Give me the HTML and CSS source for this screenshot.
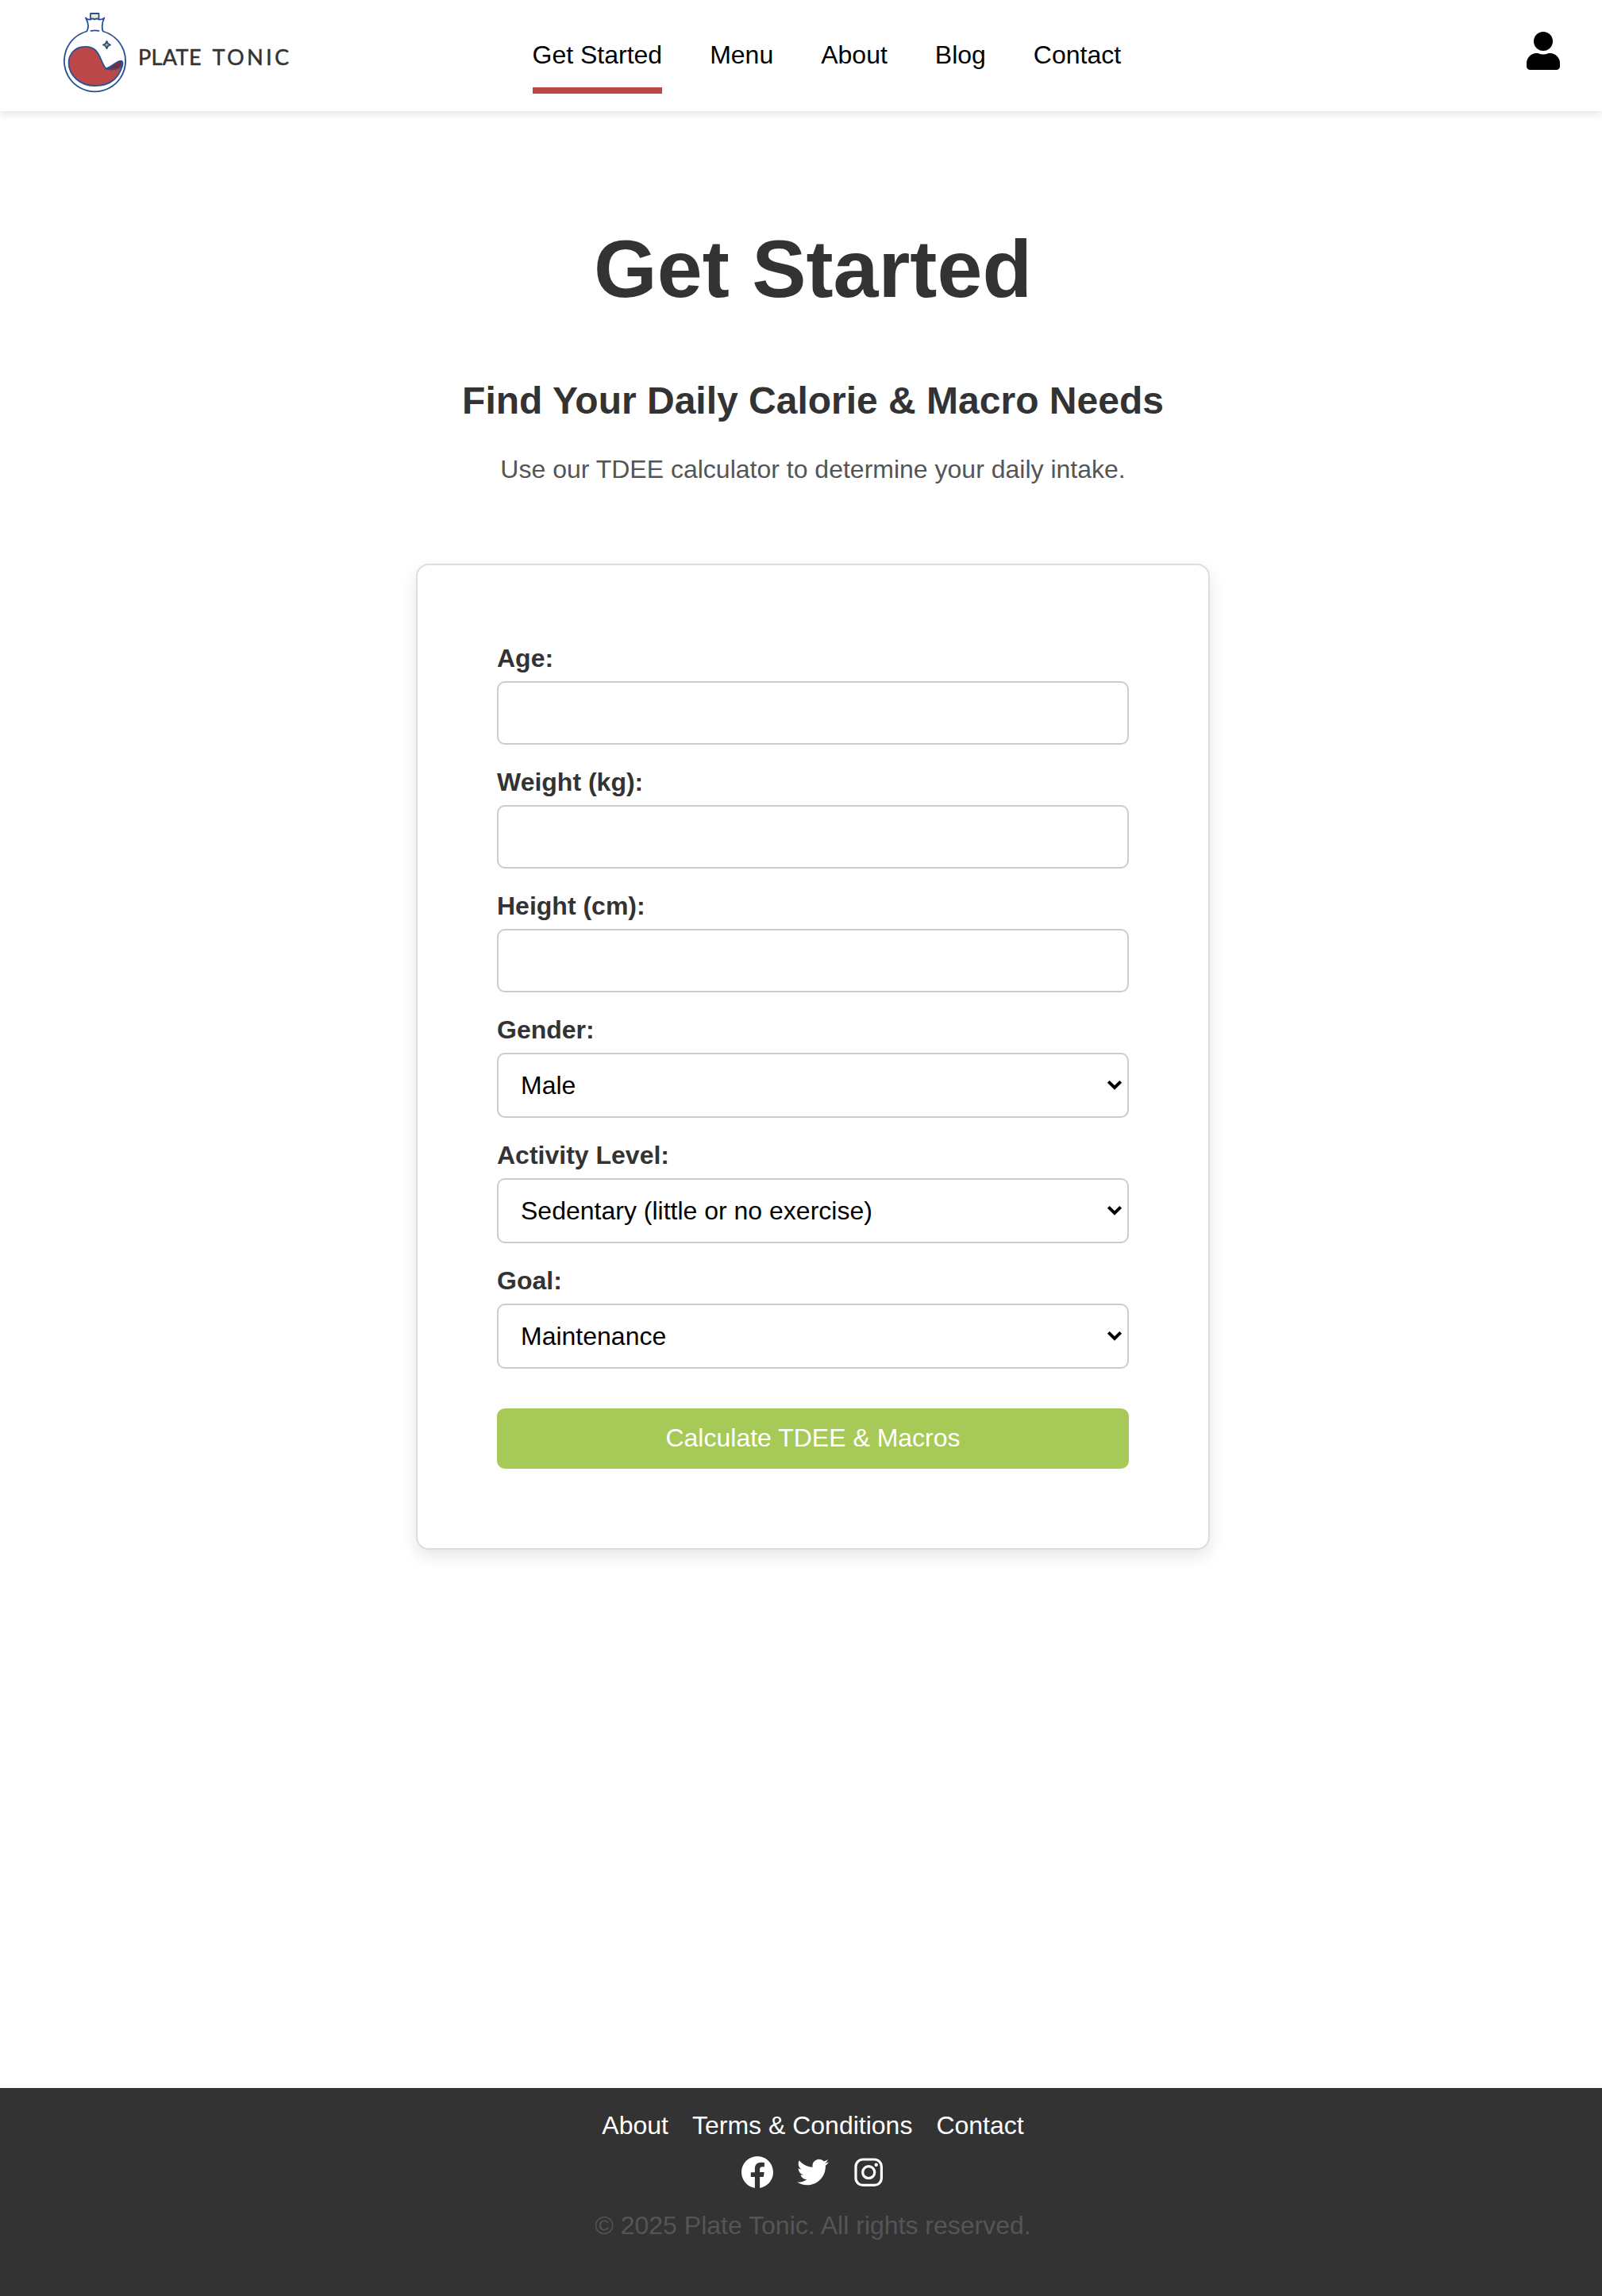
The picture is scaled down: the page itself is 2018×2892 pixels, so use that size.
FILE: index.html
```html
<!DOCTYPE html>
<html lang="en">
<head>
<meta charset="utf-8">
<title>Plate Tonic - Get Started</title>
<link rel="stylesheet" href="styles.css">
</head>
<body>
<header class="header">
  <a class="logo" href="#">
    <svg class="logo-flask" width="84" height="106" viewBox="0 0 84 106" fill="none" stroke="#27528f" stroke-width="1.8" stroke-linejoin="round" stroke-linecap="round">
      <path d="M34 9V2H44.500V9" fill="#f2e8cf"/>
      <path d="M28 7.500Q29.500 10 34 9.500Q36.500 7.500 39.200 9.500Q42 7.500 44.500 9.500Q49.500 10 51.300 7.500Q47 17 49.700 24.500A38.600 38.600 0 1 1 29.300 24.500Q33.500 17 28 7.500Z" fill="#fff"/>
      <path d="M34.500 23.800Q39.500 22.800 44.500 23.800"/>
      <path d="M26 44C44 43 45 57 50 66C52 70 53 72 56 72C62 71 68 62 73.500 62C77 64 71 79 64 85C56 92 48 93 39 93C21 93 6.600 80 6.600 64C6.600 53 15 44 26 44Z" fill="#bc4749"/>
      <path d="M53 71.500C61 70 67 61 72.500 62C74 65 73 68 70.500 70C66 73 58 73 53 71.500Z" fill="#7f2a33"/>
      <path d="M54.500 37L56 40L59 41.500L56 43L54.500 46L53 43L50 41.500L53 40Z" fill="#a7c957" stroke-width="1.900"/>
    </svg>
    <svg class="logo-name" width="192" height="32" viewBox="0 0 192 32"><text x="-1" y="25" textLength="79.500" lengthAdjust="spacing">PLATE</text><text x="92.500" y="25" textLength="96.500" lengthAdjust="spacing">TONIC</text></svg>
  </a>
  <nav class="nav">
    <a class="nav-link active" href="#">Get Started</a>
    <a class="nav-link" href="#">Menu</a>
    <a class="nav-link" href="#">About</a>
    <a class="nav-link" href="#">Blog</a>
    <a class="nav-link" href="#">Contact</a>
  </nav>
  <a class="account" href="#" aria-label="Account">
    <svg width="42" height="48" viewBox="0 0 42 48"><circle cx="21" cy="12" r="12"/><path d="M12.600 27H14.300Q21 30 27.700 27H29.400A12.600 12.600 0 0 1 42 39.600V43.500A4.500 4.500 0 0 1 37.500 48H4.500A4.500 4.500 0 0 1 0 43.500V39.600A12.600 12.600 0 0 1 12.600 27Z"/></svg>
  </a>
</header>

<main class="main">
  <h1 class="title">Get Started</h1>
  <h2 class="subtitle">Find Your Daily Calorie &amp; Macro Needs</h2>
  <p class="intro">Use our TDEE calculator to determine your daily intake.</p>
  <form class="card">
    <div class="field"><label for="age">Age:</label><input class="control" id="age" type="text"></div>
    <div class="field"><label for="weight">Weight (kg):</label><input class="control" id="weight" type="text"></div>
    <div class="field"><label for="height">Height (cm):</label><input class="control" id="height" type="text"></div>
    <div class="field"><label for="gender">Gender:</label>
      <div class="select"><select class="control" id="gender"><option>Male</option><option>Female</option></select><svg class="chevron" width="20" height="14" viewBox="0 0 20 14"><path d="M2.300 2.300L10 10L17.700 2.300"/></svg></div></div>
    <div class="field"><label for="activity">Activity Level:</label>
      <div class="select"><select class="control" id="activity"><option>Sedentary (little or no exercise)</option></select><svg class="chevron" width="20" height="14" viewBox="0 0 20 14"><path d="M2.300 2.300L10 10L17.700 2.300"/></svg></div></div>
    <div class="field"><label for="goal">Goal:</label>
      <div class="select"><select class="control" id="goal"><option>Maintenance</option></select><svg class="chevron" width="20" height="14" viewBox="0 0 20 14"><path d="M2.300 2.300L10 10L17.700 2.300"/></svg></div></div>
    <button class="submit" type="button">Calculate TDEE &amp; Macros</button>
  </form>
</main>

<footer class="footer">
  <div class="footer-links"><a href="#">About</a><a href="#">Terms &amp; Conditions</a><a href="#">Contact</a></div>
  <div class="social">
    <svg width="40" height="40" viewBox="0 0 16 16"><path d="M16 8.049c0-4.446-3.582-8.050-8-8.050C3.580 0-.002 3.603-.002 8.050c0 4.017 2.926 7.347 6.750 7.951v-5.625h-2.030V8.050H6.750V6.275c0-2.017 1.195-3.131 3.022-3.131.876 0 1.791.157 1.791.157v1.980h-1.009c-.993 0-1.303.621-1.303 1.258v1.510h2.218l-.354 2.326H9.250V16c3.824-.604 6.750-3.934 6.750-7.951z"/></svg>
    <svg width="40" height="40" viewBox="0 0 512 512"><path d="M459.370 151.716c.325 4.548.325 9.097.325 13.645 0 138.720-105.583 298.558-298.558 298.558-59.452 0-114.680-17.219-161.137-47.106 8.447.974 16.568 1.299 25.340 1.299 49.055 0 94.213-16.568 130.274-44.832-46.132-.975-84.792-31.188-98.112-72.772 6.498.974 12.995 1.624 19.818 1.624 9.421 0 18.843-1.300 27.614-3.573-48.081-9.747-84.143-51.980-84.143-102.985v-1.299c13.969 7.797 30.214 12.670 47.431 13.319-28.264-18.843-46.781-51.005-46.781-87.391 0-19.492 5.197-37.360 14.294-52.954 51.655 63.675 129.300 105.258 216.365 109.807-1.624-7.797-2.599-15.918-2.599-24.040 0-57.828 46.782-104.934 104.934-104.934 30.213 0 57.502 12.670 76.670 33.137 23.715-4.548 46.456-13.320 66.599-25.340-7.798 24.366-24.366 44.833-46.132 57.827 21.117-2.273 41.584-8.122 60.426-16.243-14.292 20.791-32.161 39.308-52.628 54.253z"/></svg>
    <svg width="40" height="40" viewBox="0 0 40 40"><g fill="none" stroke="#fff" stroke-width="3.200"><rect x="4" y="4" width="32.400" height="32.400" rx="9"/><circle cx="20.200" cy="20.200" r="7.500"/></g><circle cx="29.700" cy="10.800" r="2.200"/></svg>
  </div>
  <p class="copyright">© 2025 Plate Tonic. All rights reserved.</p>
</footer>
</body>
</html>
```
FILE: styles.css
```css
* { box-sizing: border-box; }
body {
  margin: 0;
  min-height: 2892px;
  display: flex;
  flex-direction: column;
  background: #fff;
  color: #333;
  font: 32px/36px "Liberation Sans", Arial, sans-serif;
  overflow-x: hidden;
}
a { color: inherit; text-decoration: none; }
h1, h2, p { margin: 0; }

.header {
  display: flex;
  align-items: flex-start;
  height: 140px;
  padding: 0 53px 0 80px;
  background: #fff;
  box-shadow: 0 4px 10px rgba(0, 0, 0, .1);
}
.logo { display: flex; width: 590.5px; padding-top: 14.5px; }
.logo-name { margin: 42px 0 0 11px; overflow: visible; }
.logo-name text { font: 27px Lato, sans-serif; fill: #333; stroke: #333; stroke-width: .5px; }
.nav { display: flex; gap: 60px; padding-top: 51px; color: #000; }
.nav-link { height: 67px; }
.nav-link.active { border-bottom: 8px solid #bc4749; }
.account { margin: 40px 0 0 auto; }
.account svg { display: block; }

.main {
  flex: 1;
  display: flex;
  flex-direction: column;
  align-items: center;
  padding: 140px 0 0 30px;
}
.title { font-size: 102.4px; line-height: 118px; }
.subtitle { margin-top: 80px; font-size: 48px; line-height: 54px; }
.intro { margin-top: 41px; color: #555; }
.card {
  display: flex;
  flex-direction: column;
  gap: 30px;
  width: 1000px;
  margin-top: 101px;
  padding: 100px;
  border: 2px solid #ddd;
  border-radius: 16px;
  background: #fff;
  box-shadow: 0 8px 20px rgba(0, 0, 0, .1);
}
.field { display: flex; flex-direction: column; gap: 12px; }
.field label { line-height: 34px; font-weight: bold; }
.control {
  width: 100%;
  height: 80px;
  padding: 0 28px;
  border: 2px solid #ccc;
  border-radius: 10px;
  background: #fff;
  color: #000;
  font: inherit;
  appearance: none;
}
.select { display: grid; align-items: center; }
.select .control { grid-area: 1 / 1; height: 82px; }
.chevron {
  grid-area: 1 / 1;
  justify-self: end;
  margin-right: 8px;
  fill: none;
  stroke: #000;
  stroke-width: 4;
  pointer-events: none;
}
.submit {
  height: 76px;
  margin-top: 20px;
  padding: 0 0 2px;
  border: 0;
  border-radius: 10px;
  background: #a7c957;
  color: #fff;
  font: inherit;
}

.footer {
  display: flex;
  flex-direction: column;
  align-items: center;
  height: 262px;
  padding: 29px 0 0 30px;
  background: #333;
  color: #fff;
}
.footer-links { display: flex; gap: 30px; }
.social { display: flex; gap: 30px; margin-top: 21px; fill: #fff; }
.copyright { margin-top: 29px; color: #555; }
```
